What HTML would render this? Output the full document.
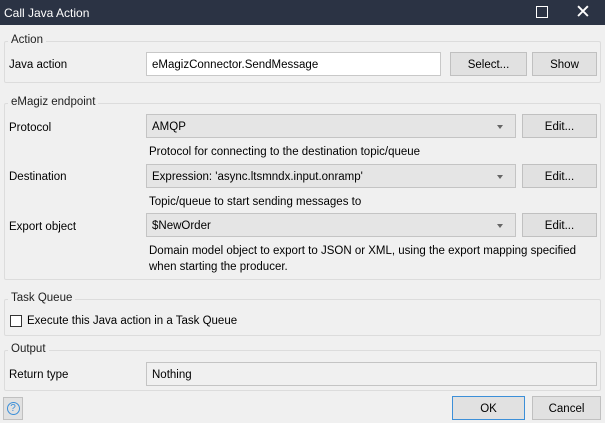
<!DOCTYPE html>
<html><head><style>
*{box-sizing:border-box;margin:0;padding:0}
body{width:605px;height:423px;background:#f0f0f0;font-family:"Liberation Sans",sans-serif;font-size:11.5px;color:#000;position:relative;overflow:hidden}
.a{position:absolute;white-space:nowrap}
.title{left:0;top:0;width:605px;height:25px;background:#2b3344;color:#fff;font-size:12px;padding:6px 4px}
.grp{position:absolute;border:1px solid #dcdcdc;border-radius:2px}
.gl{position:absolute;background:#f0f0f0;padding:0 3px;color:#222}
.tb{position:absolute;background:#fff;border:1px solid #c8c8c8;height:24px;padding:6px 5px 0}
.cb{position:absolute;background:#e5e5e5;border:1px solid #c4c4c4;height:24px;padding:6px 5px 0}
.cb:after{content:"";position:absolute;right:12px;top:10px;border-left:3px solid transparent;border-right:3px solid transparent;border-top:4px solid #666}
.cb.n:after{display:none}
.bt{position:absolute;background:#e1e1e1;border:1px solid #c0c0c0;height:24px;text-align:center;padding-top:6px}
</style></head><body>
<div class="a title">Call Java Action</div>
<div class="a" style="left:536px;top:6px;width:12px;height:12px;border:1.3px solid #fff"></div>
<div class="a" style="left:575px;top:1px;color:#fff;font-size:19px">✕</div>

<div class="grp" style="left:4px;top:41px;width:597px;height:42px"></div>
<div class="gl" style="left:8px;top:34px">Action</div>
<div class="a" style="left:9px;top:59px">Java action</div>
<div class="tb" style="left:146px;top:52px;width:295px">eMagizConnector.SendMessage</div>
<div class="bt" style="left:450px;top:52px;width:77px">Select...</div>
<div class="bt" style="left:532px;top:52px;width:65px">Show</div>

<div class="grp" style="left:4px;top:103px;width:597px;height:177px"></div>
<div class="gl" style="left:8px;top:96px">eMagiz endpoint</div>
<div class="a" style="left:9px;top:122px">Protocol</div>
<div class="cb" style="left:146px;top:114px;width:370px">AMQP</div>
<div class="bt" style="left:522px;top:114px;width:75px">Edit...</div>
<div class="a" style="left:149px;top:146px">Protocol for connecting to the destination topic/queue</div>
<div class="a" style="left:9px;top:171px">Destination</div>
<div class="cb" style="left:146px;top:164px;width:370px">Expression: 'async.ltsmndx.input.onramp'</div>
<div class="bt" style="left:522px;top:164px;width:75px">Edit...</div>
<div class="a" style="left:149px;top:196px">Topic/queue to start sending messages to</div>
<div class="a" style="left:9px;top:221px">Export object</div>
<div class="cb" style="left:146px;top:213px;width:370px">$NewOrder</div>
<div class="bt" style="left:522px;top:213px;width:75px">Edit...</div>
<div class="a" style="left:149px;top:245px">Domain model object to export to JSON or XML, using the export mapping specified</div>
<div class="a" style="left:149px;top:261px">when starting the producer.</div>

<div class="grp" style="left:4px;top:299px;width:597px;height:37px"></div>
<div class="gl" style="left:8px;top:292px">Task Queue</div>
<div class="a" style="left:10px;top:315px;width:12px;height:12px;background:#fff;border:1px solid #333"></div>
<div class="a" style="left:27px;top:315px">Execute this Java action in a Task Queue</div>

<div class="grp" style="left:4px;top:350px;width:597px;height:41px"></div>
<div class="gl" style="left:8px;top:343px">Output</div>
<div class="a" style="left:9px;top:369px">Return type</div>
<div class="cb n" style="left:146px;top:362px;width:451px;background:#f0f0f0">Nothing</div>

<div class="bt" style="left:3px;top:397px;width:20px;height:23px;padding-top:4px"><span style="display:inline-block;width:13px;height:13px;border:1px solid #3c8fd8;border-radius:50%;color:#3c8fd8;font-size:10px;line-height:11px">?</span></div>
<div class="bt" style="left:452px;top:396px;width:73px;border-color:#3c8fd8">OK</div>
<div class="bt" style="left:532px;top:396px;width:69px">Cancel</div>
</body></html>
